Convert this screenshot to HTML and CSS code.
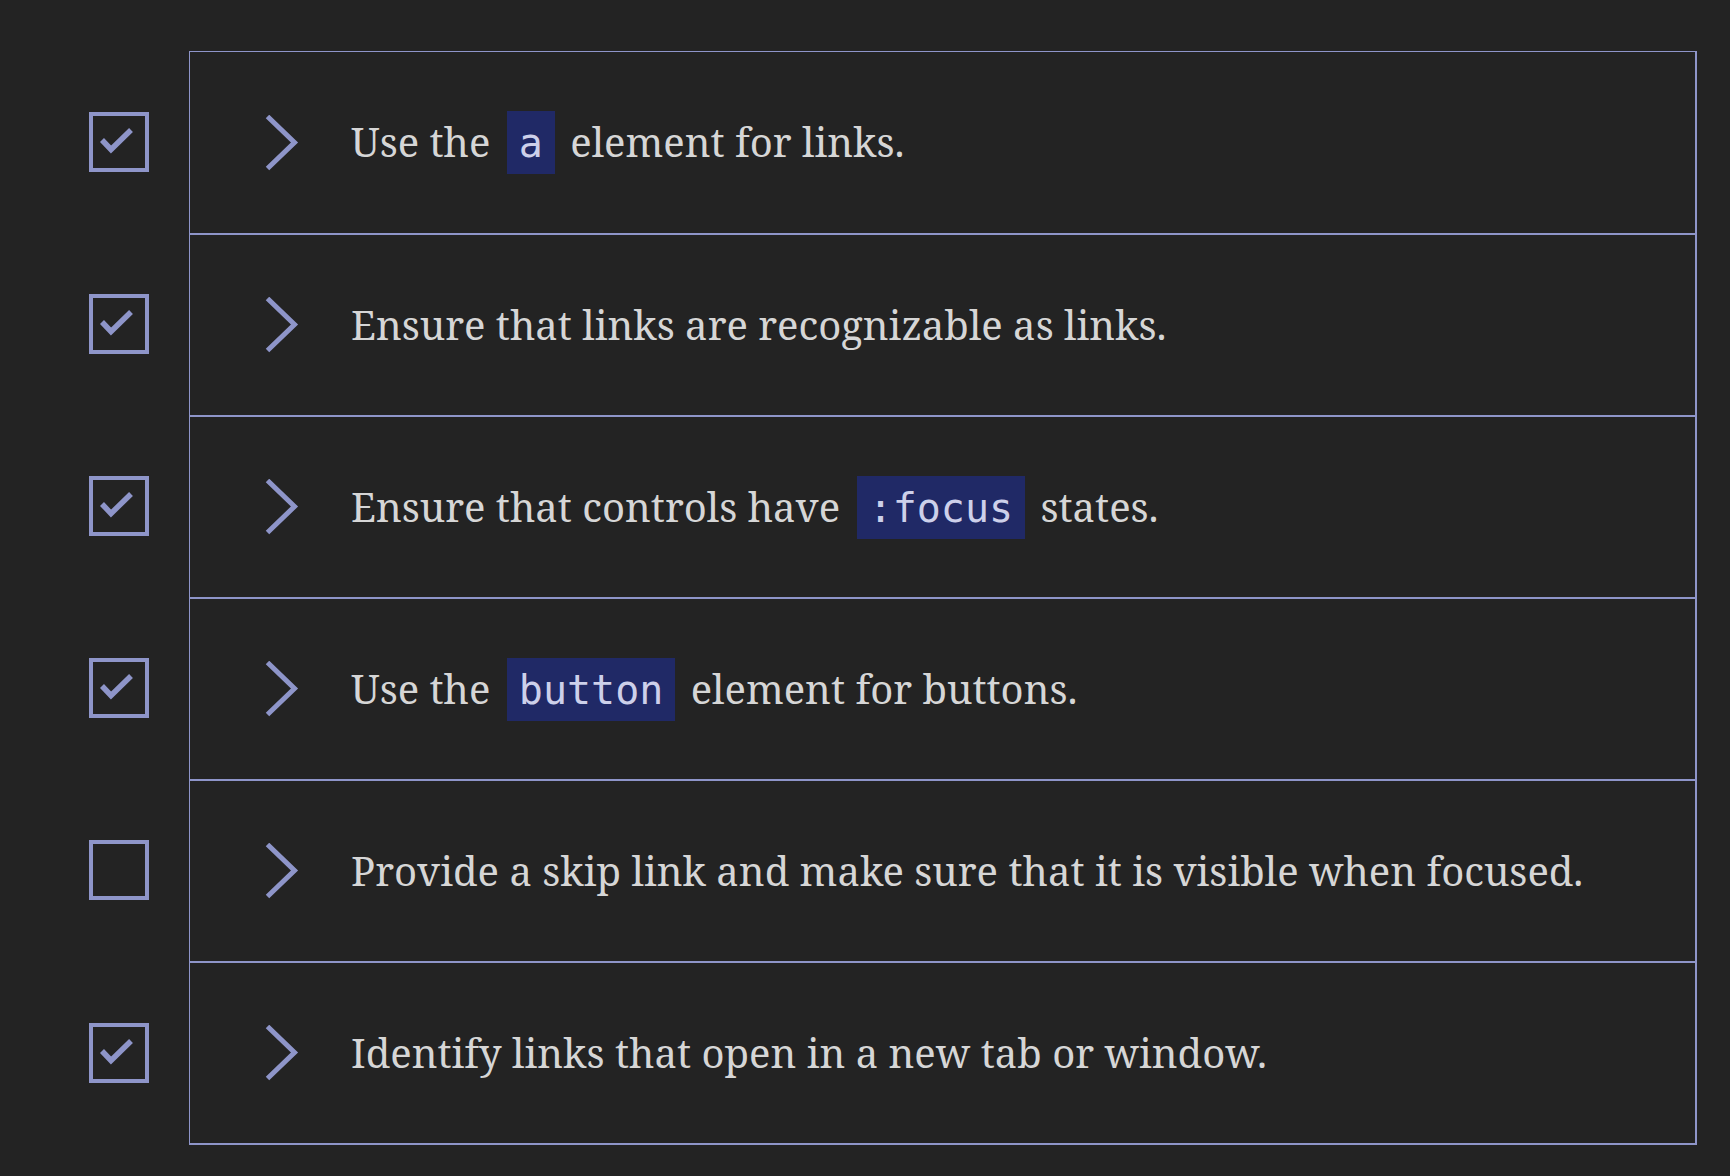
FILE: index.html
```html
<!DOCTYPE html>
<html lang="en">
<head>
<meta charset="utf-8">
<title>Checklist</title>
<link rel="stylesheet" href="styles.css">
</head>
<body>
<ul class="checklist">
  <li class="row">
    <div class="check-cell"><span class="box"><svg class="tick" viewBox="0 0 60 60"><polyline points="13,28 22,37.5 42,18"/></svg></span></div>
    <div class="item"><svg class="chev" viewBox="0 0 36 56"><polyline points="2.5,1.5 29.5,27.5 2.5,53.5"/></svg><p class="label">Use the <code>a</code> element for links.</p></div>
  </li>
  <li class="row">
    <div class="check-cell"><span class="box"><svg class="tick" viewBox="0 0 60 60"><polyline points="13,28 22,37.5 42,18"/></svg></span></div>
    <div class="item"><svg class="chev" viewBox="0 0 36 56"><polyline points="2.5,1.5 29.5,27.5 2.5,53.5"/></svg><p class="label">Ensure that links are recognizable as links.</p></div>
  </li>
  <li class="row">
    <div class="check-cell"><span class="box"><svg class="tick" viewBox="0 0 60 60"><polyline points="13,28 22,37.5 42,18"/></svg></span></div>
    <div class="item"><svg class="chev" viewBox="0 0 36 56"><polyline points="2.5,1.5 29.5,27.5 2.5,53.5"/></svg><p class="label">Ensure that controls have <code>:focus</code> states.</p></div>
  </li>
  <li class="row">
    <div class="check-cell"><span class="box"><svg class="tick" viewBox="0 0 60 60"><polyline points="13,28 22,37.5 42,18"/></svg></span></div>
    <div class="item"><svg class="chev" viewBox="0 0 36 56"><polyline points="2.5,1.5 29.5,27.5 2.5,53.5"/></svg><p class="label">Use the <code>button</code> element for buttons.</p></div>
  </li>
  <li class="row">
    <div class="check-cell"><span class="box"></span></div>
    <div class="item"><svg class="chev" viewBox="0 0 36 56"><polyline points="2.5,1.5 29.5,27.5 2.5,53.5"/></svg><p class="label">Provide a skip link and make sure that it is visible when focused.</p></div>
  </li>
  <li class="row">
    <div class="check-cell"><span class="box"><svg class="tick" viewBox="0 0 60 60"><polyline points="13,28 22,37.5 42,18"/></svg></span></div>
    <div class="item"><svg class="chev" viewBox="0 0 36 56"><polyline points="2.5,1.5 29.5,27.5 2.5,53.5"/></svg><p class="label">Identify links that open in a new tab or window.</p></div>
  </li>
</ul>
</body>
</html>
```

FILE: styles.css
```css
html, body {
  margin: 0;
  padding: 0;
  background: #232323;
}
body {
  font-family: "Noto Serif", "DejaVu Serif", serif;
  color: #d6d6d6;
}
.checklist {
  list-style: none;
  margin: 0;
  padding: 51px 0 0 0;
  width: 1697px;
}
.row {
  display: flex;
  height: 182px;
}
.check-cell {
  width: 189px;
  flex: none;
  display: flex;
  align-items: center;
  padding-left: 89px;
  box-sizing: border-box;
}
.box {
  width: 60px;
  height: 60px;
  box-sizing: border-box;
  border: 4px solid #8e95c9;
  display: block;
  position: relative;
}
.tick {
  position: absolute;
  left: -4px;
  top: -4px;
  width: 60px;
  height: 60px;
}
.tick polyline {
  fill: none;
  stroke: #8e95c9;
  stroke-width: 5.5;
  stroke-linecap: butt;
  stroke-linejoin: miter;
}
.item {
  flex: 1;
  display: flex;
  align-items: center;
  border-left: 1px solid #8e95c9;
  border-right: 2px solid #8e95c9;
  border-top: 2px solid #8e95c9;
  padding-left: 75px;
}
.row:first-child .item {
  border-top-width: 1px;
}
.row:last-child {
  height: 184px;
}
.row:last-child .item {
  border-bottom: 2px solid #8e95c9;
}
.chev {
  width: 36px;
  height: 56px;
  flex: none;
}
.chev polyline {
  fill: none;
  stroke: #8e95c9;
  stroke-width: 5;
  stroke-linecap: butt;
  stroke-linejoin: miter;
}
.label {
  margin: 0 0 0 50px;
  font-size: 40px;
  line-height: 1;
}
code {
  font-family: "DejaVu Sans Mono", monospace;
  font-size: 40px;
  background: #202966;
  color: #cdd0ea;
  padding: 9px 12px 8px;
  margin: 0 5px 0 6px;
}
```
